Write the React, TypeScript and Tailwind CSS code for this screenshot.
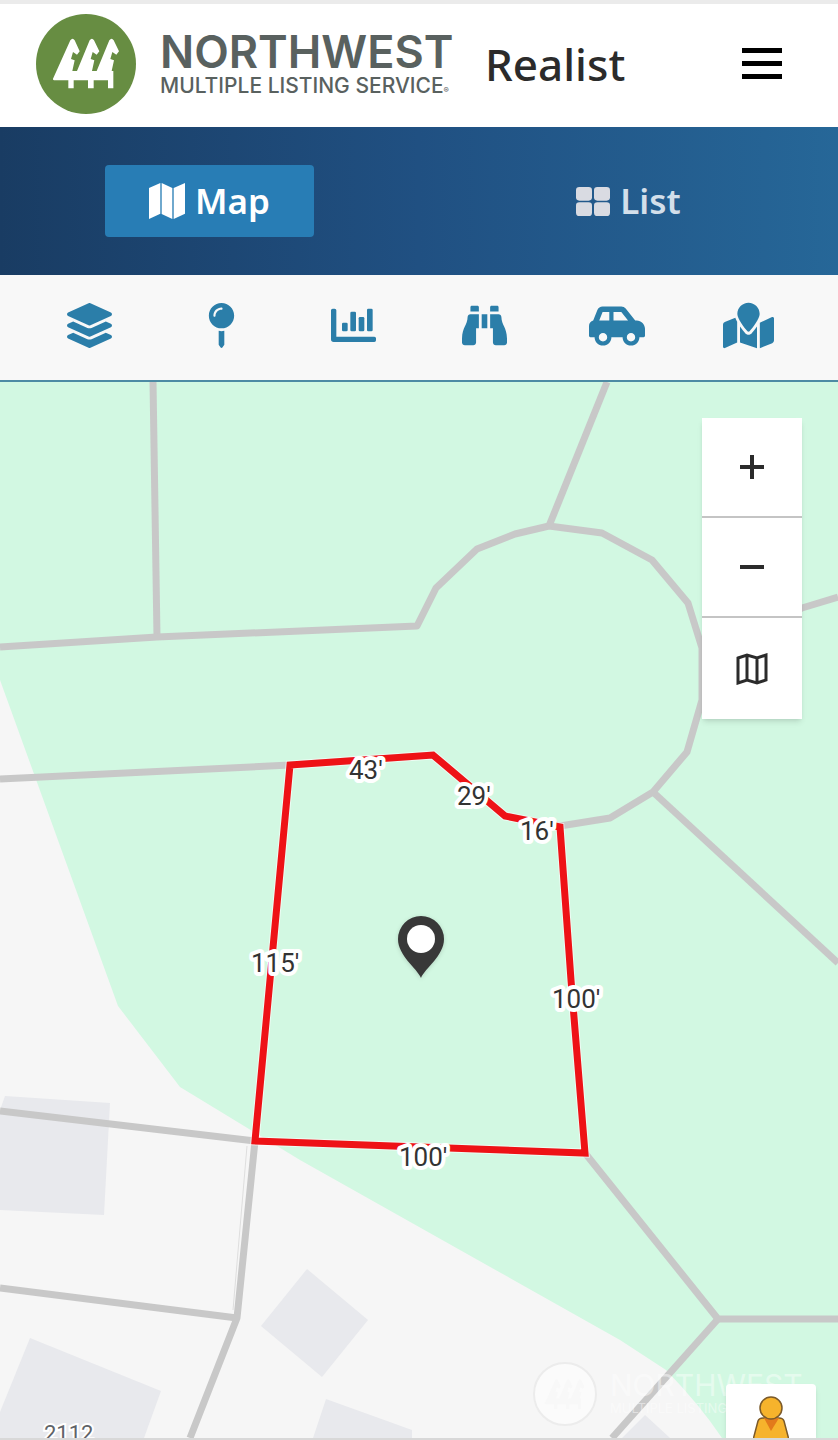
import { FaBinoculars, FaCarSide, FaLayerGroup, FaMapMarked, FaMapPin } from "react-icons/fa";

const tools = [
  { label: "Layers", icon: <FaLayerGroup size={45} /> },
  { label: "Pins", icon: <FaMapPin size={45} /> },
  { label: "Statistics", icon: <ChartIcon /> },
  { label: "Explore", icon: <FaBinoculars size={45} /> },
  { label: "Drive", icon: <FaCarSide size={56} /> },
  { label: "Locations", icon: <FaMapMarked size={51} /> },
];

// Side lengths of the selected parcel
const dimensions = [
  { text: "43'", x: 349, y: 779 },
  { text: "29'", x: 457, y: 805 },
  { text: "16'", x: 520, y: 840 },
  { text: "115'", x: 251, y: 972 },
  { text: "100'", x: 552, y: 1008 },
  { text: "100'", x: 399, y: 1166 },
];

function ChartIcon() {
  return (
    <svg viewBox="0 7 135 135" className="size-[45px]" fill="currentColor">
      <path d="M5 24H11Q16 24 16 29V108H130Q135 108 135 113V119Q135 124 130 124H8Q0 124 0 116V29Q0 24 5 24Z" />
      <rect x="33" y="66" width="17" height="26" rx="4" />
      <rect x="58" y="33" width="17" height="59" rx="4" />
      <rect x="83" y="49" width="17" height="43" rx="4" />
      <rect x="108" y="24" width="17" height="68" rx="4" />
    </svg>
  );
}

function MapIcon() {
  return (
    <svg viewBox="0 0 108 108" className="size-9" fill="currentColor">
      <path d="M0 15L34 0V92L0 108ZM38 0L70 15V108L38 93ZM74 15L108 0V92L74 108Z" />
    </svg>
  );
}

function GridIcon() {
  return (
    <svg viewBox="0 0 102 87" className="h-[29px] w-[34px] text-[#d9dbe2]" fill="currentColor">
      <rect width="48" height="41" rx="10" />
      <rect x="54" width="48" height="41" rx="10" />
      <rect y="46" width="48" height="41" rx="10" />
      <rect x="54" y="46" width="48" height="41" rx="10" />
    </svg>
  );
}

function Trees() {
  return (
    <path d="M99 236L151 121Q158 112 164 121L179 154L171 164L159 156L153 177L164 181L157 213H171L209 121Q216 112 222 121L238 154L230 164L218 156L212 177L223 181L216 213H230L268 121Q275 112 281 121L297 154L289 164L277 156L271 177L282 181L275 213H280V265H264V241H221V265H204V241H161V265H145V241H102Q98 240 99 236Z" />
  );
}

function Logo() {
  return (
    <a href="#" aria-label="Northwest Multiple Listing Service" className="flex items-center gap-6">
      <svg viewBox="48 42 300 300" className="size-[100px]">
        <circle cx="198" cy="192" r="150" fill="#678d42" />
        <g fill="#fff"><Trees /></g>
      </svg>
      <span className="flex w-[297px] flex-col pt-1 font-['Inter',sans-serif] whitespace-nowrap text-[#59615f]">
        <span className="text-[45px] leading-[44px] font-semibold">NORTHWEST</span>
        <span className="text-[21px] leading-[24px] font-medium">MULTIPLE LISTING SERVICE<span className="text-[8px]">®</span></span>
      </span>
    </a>
  );
}

function MapCanvas() {
  return (
    <svg viewBox="0 382 838 1056" preserveAspectRatio="xMidYMin slice" className="absolute inset-0 size-full">
      <rect y="382" width="838" height="1056" fill="#f6f6f6" />
      <path d="M0 382H838V1438H722Q700 1405 666 1370L620 1340L300 1160L180 1087L118 1006L0 680Z" fill="#d2f8e2" />
      <g fill="#e8e9ed">
        <path d="M5 1096L110 1103L104 1215L0 1210V1110Z" />
        <path d="M307 1269L368 1320L322 1377L261 1326Z" />
        <path d="M30 1338L161 1391L144 1438H0V1412Z" />
        <path d="M326 1399L412 1430V1438H313Z" />
        <path d="M645 1415L670 1438H622Z" />
      </g>
      {/* Lot lines */}
      <g fill="none" stroke="#c8c8c8" strokeWidth="7" strokeLinejoin="round">
        <path d="M153 382L157 637" />
        <path d="M0 647L157 637L417 626L436 588L477 549L515 534L549 526L602 533L652 560L688 603L702 648L702 700L687 752L653 792L610 818L560 826L505 816L433 755L290 765L0 779" />
        <path d="M607 382L549 526" />
        <path d="M838 597L802 608Q785 618 765 616" />
        <path d="M653 792L838 963" />
        <path d="M0 1111L255 1141L237 1318L190 1438" />
        <path d="M0 1288L237 1318" />
        <path d="M585 1153L718 1319H838" />
        <path d="M718 1319L612 1438" />
      </g>
      <path d="M247 1146L233 1310" stroke="#dedede" fill="none" />
      <path d="M290 765L433 755L505 816L560 827L571 980L585 1153L255 1141Z" fill="none" stroke="#fff" strokeOpacity="0.6" strokeWidth="9" />
      <path d="M290 765L433 755L505 816L560 827L571 980L585 1153L255 1141Z" fill="none" stroke="#ee1216" strokeWidth="7" />
      <g fontFamily="Roboto, sans-serif" fontSize="26" fill="#333" stroke="#fff" strokeWidth="8" strokeLinejoin="round" paintOrder="stroke">
        {dimensions.map((d) => (
          <text key={`${d.x}-${d.y}`} x={d.x} y={d.y}>{d.text}</text>
        ))}
      </g>
      <text x="44" y="1441" fontFamily="Roboto, sans-serif" fontSize="22" fill="#5f6368" stroke="#fff" strokeWidth="4" paintOrder="stroke">2112</text>
      {/* Location pin */}
      <g className="drop-shadow-sm">
        <path d="M421 978C417 968 398 956 398 939A23 23 0 0 1 444 939C444 956 425 968 421 978Z" fill="#383838" />
        <circle cx="421" cy="939" r="14" fill="#fff" />
      </g>
      {/* Watermark */}
      <circle cx="565" cy="1394" r="31" fill="#fff" fillOpacity="0.5" stroke="#ececec" strokeWidth="2" />
      <g transform="translate(525 1356) scale(0.2)" fill="#f8f8f8"><Trees /></g>
      <g fontFamily="Inter, sans-serif" fill="#fff" fillOpacity="0.45">
        <text x="610" y="1396" fontSize="30">NORTHWEST</text>
        <text x="610" y="1413" fontSize="13">MULTIPLE LISTING SERVICE</text>
      </g>
    </svg>
  );
}

export default function App() {
  return (
    <div className="flex min-h-screen flex-col overflow-hidden border-b-2 border-[#d8d8d8] bg-white font-['Noto_Sans',sans-serif]">
      <header className="flex h-[127px] items-center border-t-4 border-[#ebebeb] pr-14 pb-1 pl-9">
        <Logo />
        <h1 className="ml-7 text-[44px] leading-[60px] font-medium text-[#2b2b2b]">Realist</h1>
        <button aria-label="Menu" className="ml-auto flex w-10 flex-col gap-2">
          <span className="h-[5px] w-full bg-black" />
          <span className="h-[5px] w-full bg-black" />
          <span className="h-[5px] w-full bg-black" />
        </button>
      </header>

      <nav className="grid h-[148px] grid-cols-2 items-center bg-linear-to-r from-[#193c63] via-[#205082] to-[#266798] text-[35px] font-semibold">
        <button className="mx-auto flex h-[72px] w-1/2 items-center justify-center gap-2.5 rounded-sm bg-[#287db5] text-white">
          <MapIcon />
          Map
        </button>
        <button className="mx-auto flex h-[72px] w-1/2 items-center justify-center gap-2.5 text-[#d3dfea]">
          <GridIcon />
          List
        </button>
      </nav>

      <div className="flex h-[107px] items-center justify-around border-b-2 border-[#4d8ba4] bg-[#f8f8f8] px-6 pb-1 text-[#2b7ea9]">
        {tools.map((tool) => (
          <button key={tool.label} aria-label={tool.label} className="flex flex-1 justify-center">
            {tool.icon}
          </button>
        ))}
      </div>

      <main className="relative flex-1 overflow-hidden">
        <MapCanvas />
        <div className="absolute top-9 right-9 flex w-[100px] flex-col divide-y-2 divide-[#c4c4c4] bg-white text-[#2b2b2b] shadow-md">
          <button aria-label="Zoom in" className="flex h-[100px] items-center justify-center">
            <svg viewBox="0 0 24 24" className="size-6" stroke="currentColor" strokeWidth="4"><path d="M0 12H24M12 0V24" /></svg>
          </button>
          <button aria-label="Zoom out" className="flex h-[100px] items-center justify-center">
            <svg viewBox="0 0 24 24" className="size-6" stroke="currentColor" strokeWidth="4"><path d="M0 12H24" /></svg>
          </button>
          <button aria-label="Map type" className="flex h-[101px] items-center justify-center">
            <svg viewBox="0 0 32 32" className="size-8" fill="none" stroke="currentColor" strokeWidth="3">
              <path d="M2 5L11 2L21 5L30 2V27L21 30L11 27L2 30ZM11 2V27M21 5V30" />
            </svg>
          </button>
        </div>
        <button aria-label="Street View" className="absolute right-[22px] bottom-0 flex h-[54px] w-[90px] justify-center overflow-hidden rounded-t-sm bg-white pt-3 shadow-md">
          <svg viewBox="0 0 36 44" className="h-11 w-9" stroke="#7b5a2a" strokeWidth="1.5">
            <path d="M0 44L5 25Q6 22 10 22H26Q30 22 31 25L36 44Z" fill="#f6b32c" />
            <path d="M11 22H26L18 35Z" fill="#e27a1b" stroke="none" />
            <circle cx="18" cy="12" r="11" fill="#f6b32c" />
          </svg>
        </button>
      </main>
    </div>
  );
}
